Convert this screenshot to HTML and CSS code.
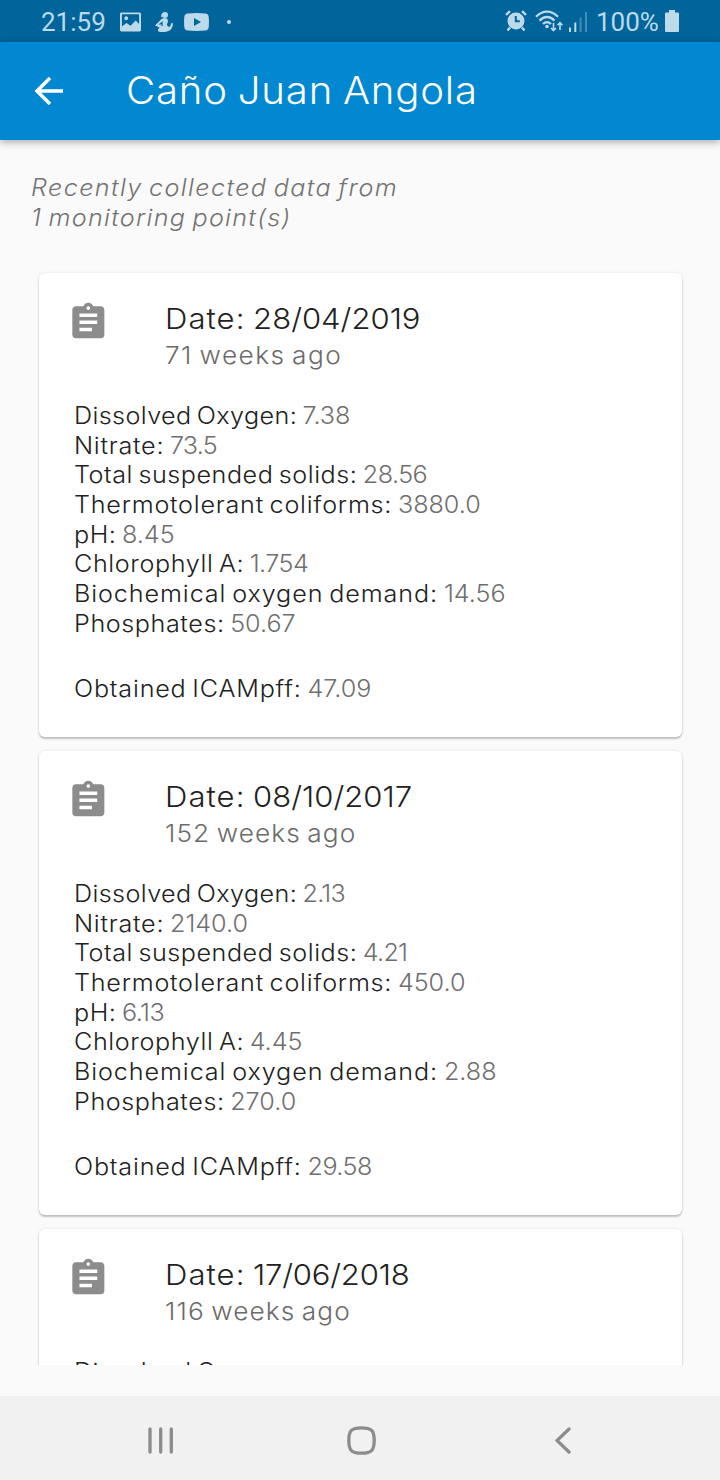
FILE: index.html
```html
<!DOCTYPE html>
<html lang="en">
<head>
<meta charset="utf-8">
<title>Caño Juan Angola</title>
<link rel="stylesheet" href="styles.css">
</head>
<body>
<svg class="defs" width="0" height="0">
  <symbol id="clipboard" viewBox="0 0 24 24"><path d="M19 3h-4.18C14.4 1.84 13.3 1 12 1c-1.3 0-2.4.84-2.82 2H5c-1.1 0-2 .9-2 2v14c0 1.1.9 2 2 2h14c1.1 0 2-.9 2-2V5c0-1.1-.9-2-2-2zm-7 0c.55 0 1 .45 1 1s-.45 1-1 1-1-.45-1-1 .45-1 1-1zm2 14H7v-2h7v2zm3-4H7v-2h10v2zm0-4H7V7h10v2z"/></symbol>
</svg>

<div class="status">
  <span class="clock">21:59</span>
  <svg class="st-image" viewBox="0 0 22 20"><path fill-rule="evenodd" d="M1.5 0h19A1.5 1.5 0 0 1 22 1.500v17a1.500 1.500 0 0 1-1.500 1.500h-19A1.500 1.500 0 0 1 0 18.500v-17A1.500 1.500 0 0 1 1.500 0zM2 2v12.500l5-3.500 4 3 5.500-5.500L20 12V2zM6.500 4a2 2 0 1 1 0 4 2 2 0 0 1 0-4z"/></svg>
  <svg class="st-figure" viewBox="0 0 18 20"><circle cx="10" cy="3" r="3"/><path d="M8 .8Q5.500 2 6.300 5.500L8 4zM6.500 7Q9 5.500 12 6.500 14 9 11.800 12.500 12.500 14.500 14 15 16 14 16 11.500L18 11Q18 18 12 19.500 7 20.500 3.500 19.500 2 18 4.500 15.500L0 13.500z"/><path class="cut" d="M4.500 12.500l2.500-2v3.500"/></svg>
  <svg class="st-tube" viewBox="0 0 25 18"><path fill-rule="evenodd" d="M4 .4Q12.500-.4 21 .4q3.500.2 3.700 3.600.5 5 0 10-.2 3.400-3.700 3.600-8.500.8-17 0Q.5 17.400.3 14-.2 9 .3 4 .5.600 4 .4zM10 5v8l7-4z"/></svg>
  <span class="st-dot"></span>
  <span class="spacer"></span>
  <svg class="st-alarm" viewBox="0 0 22 22"><path fill-rule="evenodd" d="M11 2.500a8.500 8.500 0 1 1 0 17 8.500 8.500 0 0 1 0-17zM9.800 6v6.200h5v-2h-3V6z"/><path class="line" d="M1 4.800L5 1.200M21 4.800L17 1.200M5 17.500l-2.500 3M17 17.500l2.500 3"/></svg>
  <svg class="st-wifi" viewBox="0 0 28 22"><path class="wave" d="M1 6.800c6.500-7 15.500-7 22 0M4.500 10.600c4.500-4.800 10.500-4.800 15 0M8 14c2.600-2.600 5.400-2.600 8 0"/><circle cx="12" cy="16.500" r="1.800"/><path class="arrows" d="M18.500 13v7M16 18l2.500 2.600L21 18M25 20v-7M22.500 15.300l2.500-2.600 2.500 2.600"/></svg>
  <svg class="st-signal" viewBox="0 0 18 20"><path d="M0 15.500h2V20H0zM5.300 10.500h2V20h-2z"/><path class="faint" d="M10.600 5.500h2V20h-2zM16 0h2v20h-2z"/></svg>
  <span class="percent">100%</span>
  <svg class="st-battery" viewBox="0 0 14 22"><path d="M4 0h6v2.500h3q1 0 1 1V21q0 1-1 1H1q-1 0-1-1V3.500q0-1 1-1h3z"/></svg>
</div>

<header class="appbar">
  <svg class="back" viewBox="0 0 28 28"><path d="M28 14H2M15 1L2 14l13 13"/></svg>
  <h1>Caño Juan Angola</h1>
</header>

<main class="page">
  <p class="intro">Recently collected data from<br><span class="points">1 monitoring point(s)</span></p>
  <div class="list">
    <article class="card">
      <div class="head">
        <svg class="clip"><use href="#clipboard"/></svg>
        <div><h2><span class="word">Date: </span>28/04/2019</h2><p class="ago loose">71 weeks ago</p></div>
      </div>
      <div class="data">
        <p><b class="oxygen">Dissolved Oxygen: </b>7.38</p>
        <p class="tight"><b class="nitrate">Nitrate: </b>73.5</p>
        <p class="snug"><b class="solids">Total suspended solids: </b>28.56</p>
        <p><b class="coliforms">Thermotolerant coliforms: </b>3880.0</p>
        <p><b class="ph">pH: </b>8.45</p>
        <p class="snug"><b class="chlorophyll">Chlorophyll A: </b>1.754</p>
        <p><b class="demand">Biochemical oxygen demand: </b>14.56</p>
        <p><b class="phosphates">Phosphates: </b>50.67</p>
      </div>
      <p class="result"><b class="icam">Obtained ICAMpff: </b>47.09</p>
    </article>
    <article class="card">
      <div class="head">
        <svg class="clip"><use href="#clipboard"/></svg>
        <div><h2><span class="word">Date: </span>08/10/2017</h2><p class="ago">152 weeks ago</p></div>
      </div>
      <div class="data">
        <p class="tight"><b class="oxygen">Dissolved Oxygen: </b>2.13</p>
        <p><b class="nitrate">Nitrate: </b>2140.0</p>
        <p class="tight"><b class="solids">Total suspended solids: </b>4.21</p>
        <p><b class="coliforms">Thermotolerant coliforms: </b>450.0</p>
        <p class="snug"><b class="ph">pH: </b>6.13</p>
        <p><b class="chlorophyll">Chlorophyll A: </b>4.45</p>
        <p><b class="demand">Biochemical oxygen demand: </b>2.88</p>
        <p><b class="phosphates">Phosphates: </b>270.0</p>
      </div>
      <p class="result snug"><b class="icam">Obtained ICAMpff: </b>29.58</p>
    </article>
    <article class="card">
      <div class="head">
        <svg class="clip"><use href="#clipboard"/></svg>
        <div><h2 class="snug-date"><span class="word">Date: </span>17/06/2018</h2><p class="ago">116 weeks ago</p></div>
      </div>
      <div class="data">
        <p><b class="oxygen">Dissolved Oxygen: </b></p>
      </div>
    </article>
  </div>
</main>

<nav class="navbar">
  <svg class="recents" viewBox="0 0 26 27"><path d="M2 2v23M12.700 2v23M23.300 2v23"/></svg>
  <svg class="home" viewBox="0 0 29 29"><path d="M14.500 1.800C24.500 1.800 27.200 4.500 27.200 14.500S24.500 27.200 14.500 27.200 1.800 24.500 1.800 14.500 4.500 1.800 14.500 1.800z"/></svg>
  <svg class="prev" viewBox="0 0 16 27"><path d="M14 2L2 13.500 14 25"/></svg>
</nav>
</body>
</html>
```

FILE: styles.css
```css
* { box-sizing: border-box; margin: 0; padding: 0; }
html, body { height: 1480px; overflow: hidden; }
body {
  display: flex;
  flex-direction: column;
  background: #fafafa;
  font-family: Inter, "Open Sans", sans-serif;
  font-weight: 300;
}
svg { display: block; flex: none; }
.defs { position: absolute; }

/* status bar */
.status {
  display: flex;
  align-items: center;
  flex: none;
  height: 42px;
  padding: 2px 41px 0 41px;
  background: #01659c;
  color: #bcdaea;
  fill: #bcdaea;
  font: 400 26px/40px Roboto, sans-serif;
}
.clock { width: 79px; }
.st-image { width: 21px; height: 20px; }
.st-figure { width: 18px; height: 20px; margin-left: 14px; }
.st-tube { width: 25px; height: 18px; margin-left: 11px; }
.st-dot { width: 4px; height: 4px; margin-left: 18px; border-radius: 50%; background: #bcdaea; }
.spacer { flex: 1; }
.st-alarm { width: 22px; height: 22px; margin-top: -2px; }
.st-wifi { width: 28px; height: 22px; margin-left: 8px; margin-top: -2px; }
.st-signal { width: 18px; height: 20px; margin-left: 6px; margin-right: 9px; }
.percent { width: 67px; font-size: 26px; }
.st-battery { width: 14px; height: 22px; margin-left: 2px; margin-top: -3px; }
.cut { fill: none; stroke: #01659c; stroke-width: 1.3; }
.line { fill: none; stroke: #bcdaea; stroke-width: 2.4; }
.wave { fill: none; stroke: #bcdaea; stroke-width: 2.3; }
.arrows { fill: none; stroke: #bcdaea; stroke-width: 1.6; }
.faint { opacity: .35; }

/* app bar */
.appbar {
  display: flex;
  align-items: center;
  flex: none;
  height: 98px;
  padding-left: 35px;
  background: #0288d1;
  box-shadow: 0 2px 8px rgba(0, 0, 0, .34);
  position: relative;
}
.back { width: 28px; height: 28px; fill: none; stroke: #fff; stroke-width: 3.500; }
h1 {
  margin: -2px 0 0 62.500px;
  color: #fff;
  font-size: 37.500px;
  font-weight: 300;
  letter-spacing: .75px;
}

/* slightly extended letterforms */
h1, h2, .intro, .ago, .data, .result {
  transform: scaleX(1.07);
  transform-origin: left center;
  word-spacing: -2px;
}

/* content */
.page { flex: none; height: 1225px; overflow: hidden; padding: 32.700px 30px 0; }
.intro {
  width: 500px;
  padding-left: 1px;
  color: #737373;
  font-size: 23.500px;
  font-style: italic;
  line-height: 30px;
  letter-spacing: 1.3px;
}
.points { letter-spacing: 1.2px; }
.list { display: flex; flex-direction: column; gap: 14px; padding: 40.300px 8.500px 0; }
.card {
  height: 464px;
  flex: none;
  padding: 28.300px 60px 0 35.500px;
  border-radius: 6px;
  background: #fff;
  box-shadow: 0 2px 2px rgba(0, 0, 0, .22), 0 0 3px rgba(0, 0, 0, .1);
}
.head { display: flex; margin-left: -7.300px; }
.clip { width: 42.700px; height: 42.700px; fill: #8c8c8c; }
.head div { margin-left: 55.800px; }
h2 { height: 35.900px; color: #212121; font-size: 29px; font-weight: 300; line-height: 36px; letter-spacing: 0; }
.snug-date { letter-spacing: -.2px; }
.word { letter-spacing: 1px; }
.ago { color: #6b6b6b; font-size: 24.500px; line-height: 36px; letter-spacing: 1.05px; }
.loose { letter-spacing: 1.35px; }
.data { margin: 27.800px 0 35.200px; }
.data p, .result { color: #6f6f6f; font-size: 23.500px; line-height: 29.700px; letter-spacing: 0; }
.data .tight { letter-spacing: -.7px; }
.data .snug, .result.snug { letter-spacing: -.5px; }
b { color: #212121; font-weight: 300; }
.oxygen { letter-spacing: .37px; }
.nitrate { letter-spacing: .7px; }
.solids { letter-spacing: .5px; }
.coliforms { letter-spacing: .71px; }
.ph { letter-spacing: .5px; }
.chlorophyll { letter-spacing: .56px; }
.demand { letter-spacing: .85px; }
.phosphates { letter-spacing: .55px; }
.icam { letter-spacing: .76px; }

/* system navigation */
.navbar {
  display: flex;
  align-items: center;
  flex: none;
  height: 84px;
  margin-top: 31px;
  padding: 5px 149px 0 148px;
  background: #f1f1f1;
  fill: none;
  stroke: #8c8c8c;
  stroke-width: 3.300;
  stroke-linecap: round;
}
.recents { width: 26px; height: 27px; }
.home { width: 29px; height: 29px; margin-left: 173px; }
.prev { width: 16px; height: 27px; margin-left: 179px; }
```
